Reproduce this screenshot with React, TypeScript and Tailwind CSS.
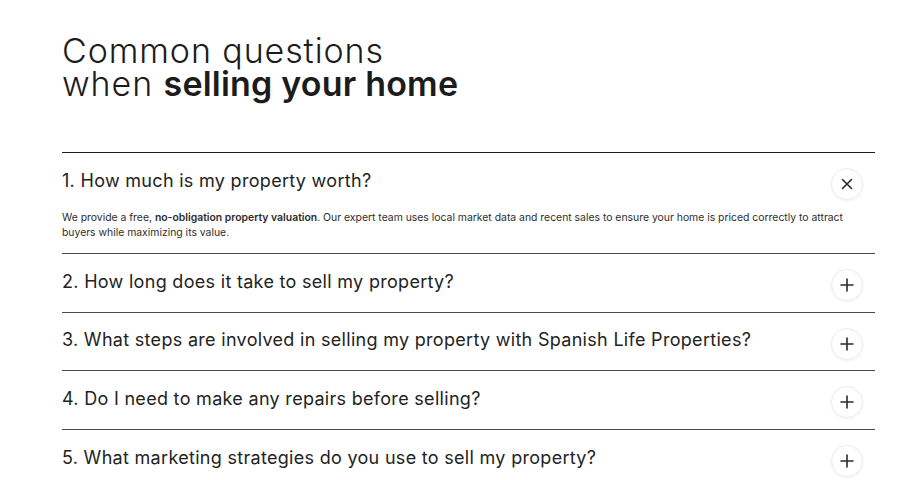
import React, { useState } from 'react';

const faqs = [
  {
    q: '1. How much is my property worth?',
    a: (
      <>
        We provide a free, <strong className="font-semibold">no-obligation property valuation</strong>. Our expert
        team uses local market data and recent sales to ensure your home is priced correctly to attract buyers while
        maximizing its value.
      </>
    ),
  },
  { q: '2. How long does it take to sell my property?' },
  { q: '3. What steps are involved in selling my property with Spanish Life Properties?' },
  { q: '4. Do I need to make any repairs before selling?' },
  { q: '5. What marketing strategies do you use to sell my property?' },
];

const CloseIcon = () => (
  <svg width="12" height="12" viewBox="0 0 12 12" fill="none" stroke="#2a2a2a" strokeWidth="1.6" strokeLinecap="round">
    <path d="M1.5 1.5l9 9M10.5 1.5l-9 9" />
  </svg>
);

const PlusIcon = () => (
  <svg width="14" height="14" viewBox="0 0 14 14" fill="none" stroke="#2a2a2a" strokeWidth="1.6" strokeLinecap="round">
    <path d="M7 1v12M1 7h12" />
  </svg>
);

export default function App() {
  const [open, setOpen] = useState(0);

  return (
    <div className="w-[920px] h-[480px] overflow-hidden bg-white font-['Inter',sans-serif] text-[#1f1f1f]">
      <div className="pl-[62px] pr-[45px] pt-[34px]">
        <h2 className="text-[34px] leading-[33px] font-light tracking-[0.9px] text-[#1c1c1c]">
          Common questions
          <br />
          when <span className="font-semibold tracking-[0.2px]">selling your home</span>
        </h2>

        <div className="mt-[52px] border-t border-[#1c1c1c]">
          {faqs.map((item, i) => {
            const isOpen = open === i;
            return (
              <div key={i} className={i > 0 ? 'border-t border-[#4a4a4a]' : ''}>
                <button
                  onClick={() => setOpen(isOpen ? -1 : i)}
                  className={`w-full flex items-center justify-between text-left ${isOpen ? 'h-[57px]' : 'h-[57.6px]'}`}
                >
                  <span className="pb-[3px] text-[18px] text-[#232323] tracking-[0.3px]">{item.q}</span>
                  <span className="mr-[12px] mt-[5px] w-[32px] h-[32px] rounded-full border border-[#ececec] shadow-[0_1px_3px_rgba(0,0,0,0.06)] flex items-center justify-center">
                    {isOpen ? <CloseIcon /> : <PlusIcon />}
                  </span>
                </button>
                {isOpen && item.a && (
                  <p className="pb-[13px] text-[10.4px] leading-[15px] text-[#2d2d2d]">{item.a}</p>
                )}
              </div>
            );
          })}
        </div>
      </div>
    </div>
  );
}
